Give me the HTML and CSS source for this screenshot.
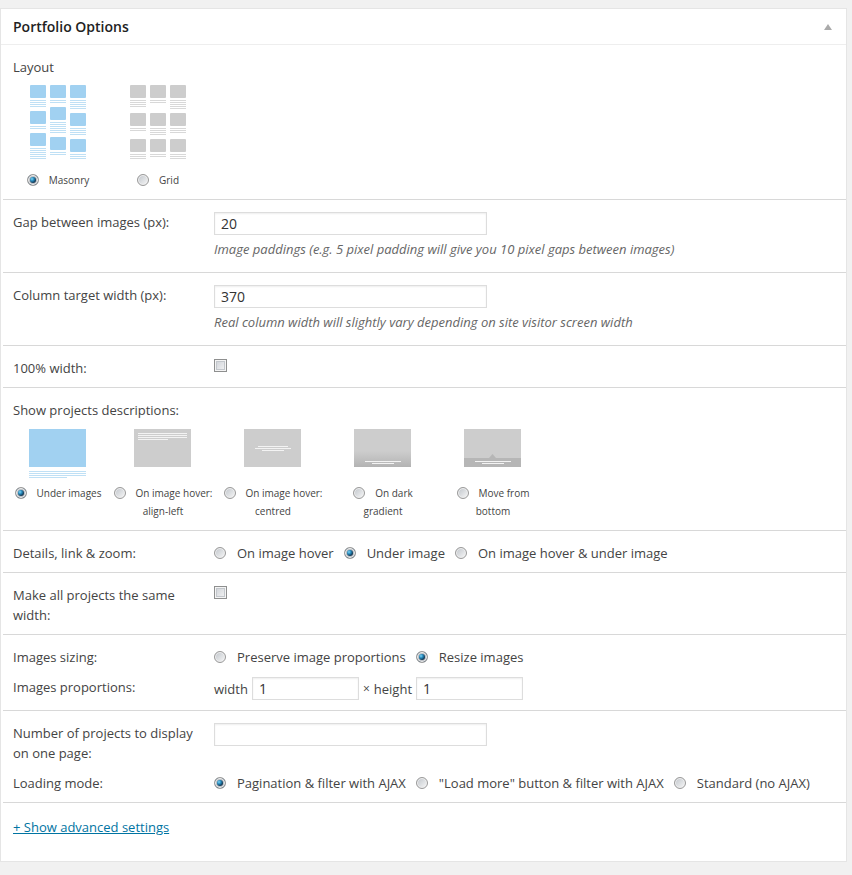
FILE: index.html
```html
<!DOCTYPE html>
<html lang="en">
<head>
  <meta charset="utf-8">
  <title>Portfolio Options</title>
  <link rel="stylesheet" href="styles.css">
</head>
<body>

  <form class="postbox">
    <div class="postbox-header">
      <h2>Portfolio Options</h2>
      <button type="button" class="toggle" aria-label="Toggle panel">
        <svg width="8" height="6" viewBox="0 0 8 6"><path d="M4 0L8 6H0z" fill="#aaa"/></svg>
      </button>
    </div>

    <div class="inside">

      <div class="section">
        <div class="label" id="layout-label">Layout</div>
        <div class="choices" role="radiogroup" aria-labelledby="layout-label">
          <label class="choice">
            <svg width="56" height="80" viewBox="0 0 56 80">
              <g fill="#a1d1f1">
                <rect x="0" y="0" width="16" height="13" rx="1"/>
                <rect x="0" y="26" width="16" height="13" rx="1"/>
                <rect x="0" y="48" width="16" height="13" rx="1"/>
                <rect x="20" y="0" width="16" height="13" rx="1"/>
                <rect x="20" y="22" width="16" height="13" rx="1"/>
                <rect x="20" y="52" width="16" height="13" rx="1"/>
                <rect x="40" y="0" width="16" height="13" rx="1"/>
                <rect x="40" y="28" width="16" height="13" rx="1"/>
                <rect x="40" y="54" width="16" height="13" rx="1"/>
              </g>
              <path fill="#bfe0f5" d="M0 15h16v1H0zM0 17h16v1H0zM0 19h16v1H0zM0 21h16v1H0zM0 41h16v1H0zM0 43h16v1H0zM0 63h16v1H0zM0 65h16v1H0zM0 67h16v1H0zM0 69h16v1H0zM0 71h16v1H0zM0 73h16v1H0z"/>
              <path fill="#bfe0f5" d="M20 15h16v1H20zM20 17h16v1H20zM20 37h16v1H20zM20 39h16v1H20zM20 41h16v1H20zM20 43h16v1H20zM20 45h16v1H20zM20 47h16v1H20zM20 67h16v1H20zM20 69h16v1H20z"/>
              <path fill="#bfe0f5" d="M40 15h16v1H40zM40 17h16v1H40zM40 19h16v1H40zM40 21h16v1H40zM40 23h16v1H40zM40 43h16v1H40zM40 45h16v1H40zM40 47h16v1H40zM40 49h16v1H40zM40 69h16v1H40zM40 71h16v1H40zM40 73h16v1H40z"/>
            </svg>
            <span><input type="radio" name="layout" checked>Masonry</span>
          </label>
          <label class="choice">
            <svg width="56" height="80" viewBox="0 0 56 80">
              <g fill="#cdcdcd">
                <rect x="0" y="0" width="16" height="13" rx="1"/>
                <rect x="0" y="28" width="16" height="13" rx="1"/>
                <rect x="0" y="54" width="16" height="13" rx="1"/>
                <rect x="20" y="0" width="16" height="13" rx="1"/>
                <rect x="20" y="28" width="16" height="13" rx="1"/>
                <rect x="20" y="54" width="16" height="13" rx="1"/>
                <rect x="40" y="0" width="16" height="13" rx="1"/>
                <rect x="40" y="28" width="16" height="13" rx="1"/>
                <rect x="40" y="54" width="16" height="13" rx="1"/>
              </g>
              <path fill="#d8d8d8" d="M0 15h16v1H0zM0 17h16v1H0zM0 19h16v1H0zM0 21h16v1H0zM0 43h16v1H0zM0 45h16v1H0zM0 69h16v1H0zM0 71h16v1H0zM0 73h16v1H0z"/>
              <path fill="#d8d8d8" d="M20 15h16v1H20zM20 17h16v1H20zM20 43h16v1H20zM20 45h16v1H20zM20 47h16v1H20zM20 49h16v1H20zM20 69h16v1H20zM20 71h16v1H20z"/>
              <path fill="#d8d8d8" d="M40 15h16v1H40zM40 17h16v1H40zM40 19h16v1H40zM40 21h16v1H40zM40 23h16v1H40zM40 43h16v1H40zM40 45h16v1H40zM40 47h16v1H40zM40 69h16v1H40zM40 71h16v1H40zM40 73h16v1H40z"/>
            </svg>
            <span><input type="radio" name="layout">Grid</span>
          </label>
        </div>
      </div>

      <div class="section">
        <div class="row">
          <label class="label" for="gap">Gap between images (px):</label>
          <div>
            <input type="text" class="text" id="gap" value="20">
            <p class="description">Image paddings (e.g. 5 pixel padding will give you 10 pixel gaps between images)</p>
          </div>
        </div>
      </div>

      <div class="section">
        <div class="row">
          <label class="label" for="column-width">Column target width (px):</label>
          <div>
            <input type="text" class="text" id="column-width" value="370">
            <p class="description">Real column width will slightly vary depending on site visitor screen width</p>
          </div>
        </div>
      </div>

      <div class="section">
        <div class="row">
          <label class="label" for="full-width">100% width:</label>
          <div><input type="checkbox" id="full-width"></div>
        </div>
      </div>

      <div class="section">
        <div class="label" id="desc-label">Show projects descriptions:</div>
        <div class="choices" role="radiogroup" aria-labelledby="desc-label">
          <label class="choice">
            <svg width="58" height="50" viewBox="0 0 58 50">
              <path fill="#a1d1f1" d="M0 1h57v38H0z"/>
              <path fill="#bfe0f5" d="M0 43h57v1H0zM0 45h57v1H0zM0 47h57v1H0zM0 49h38v1H0z"/>
            </svg>
            <span><input type="radio" name="descriptions" checked>Under images</span>
          </label>
          <label class="choice wide">
            <svg width="58" height="50" viewBox="0 0 58 50">
              <path fill="#cdcdcd" d="M0 1h57v38H0z"/>
              <path fill="#f3f3f3" d="M4 5h49v1H4zM4 7h49v1H4zM4 9h49v1H4zM4 11h30v1H4z"/>
            </svg>
            <span><input type="radio" name="descriptions">On image hover:<br>align-left</span>
          </label>
          <label class="choice wide">
            <svg width="58" height="50" viewBox="0 0 58 50">
              <path fill="#cdcdcd" d="M0 1h57v38H0z"/>
              <path fill="#f3f3f3" d="M14 18h30v1H14zM11 20h36v1H11zM18 22h22v1H18z"/>
            </svg>
            <span><input type="radio" name="descriptions">On image hover:<br>centred</span>
          </label>
          <label class="choice wide">
            <svg width="58" height="50" viewBox="0 0 58 50">
              <defs>
                <linearGradient id="dark" x1="0" y1="0" x2="0" y2="1">
                  <stop offset="0" stop-color="#cdcdcd"/>
                  <stop offset="1" stop-color="#b3b3b3"/>
                </linearGradient>
              </defs>
              <path fill="#cdcdcd" d="M0 1h57v38H0z"/>
              <path fill="url(#dark)" d="M0 23h57v16H0z"/>
              <path fill="#f3f3f3" d="M11 33h36v1H11zM18 35h22v1H18z"/>
            </svg>
            <span><input type="radio" name="descriptions">On dark<br>gradient</span>
          </label>
          <label class="choice wide">
            <svg width="58" height="50" viewBox="0 0 58 50">
              <path fill="#cdcdcd" d="M0 1h57v38H0z"/>
              <path fill="#b6b6b6" d="M0 30h25l3.500-4 3.500 4h25v9H0z"/>
              <path fill="#f3f3f3" d="M11 33h36v1H11zM18 35h22v1H18z"/>
            </svg>
            <span><input type="radio" name="descriptions">Move from<br>bottom</span>
          </label>
        </div>
      </div>

      <div class="section">
        <div class="row">
          <div class="label" id="details-label">Details, link &amp; zoom:</div>
          <div class="radios" role="radiogroup" aria-labelledby="details-label">
            <label><input type="radio" name="details">On image hover</label>
            <label><input type="radio" name="details" checked>Under image</label>
            <label><input type="radio" name="details">On image hover &amp; under image</label>
          </div>
        </div>
      </div>

      <div class="section">
        <div class="row">
          <label class="label" for="same-width">Make all projects the same width:</label>
          <div><input type="checkbox" id="same-width"></div>
        </div>
      </div>

      <div class="section">
        <div class="row">
          <div class="label" id="sizing-label">Images sizing:</div>
          <div class="radios" role="radiogroup" aria-labelledby="sizing-label">
            <label><input type="radio" name="sizing">Preserve image proportions</label>
            <label><input type="radio" name="sizing" checked>Resize images</label>
          </div>
        </div>
        <div class="row">
          <div class="label">Images proportions:</div>
          <div class="proportions">
            <label for="prop-width">width</label>
            <input type="text" class="text small" id="prop-width" value="1">
            <span class="times">×</span>
            <label for="prop-height">height</label>
            <input type="text" class="text small" id="prop-height" value="1">
          </div>
        </div>
      </div>

      <div class="section">
        <div class="row">
          <label class="label" for="per-page">Number of projects to display on one page:</label>
          <div><input type="text" class="text" id="per-page"></div>
        </div>
        <div class="row">
          <div class="label" id="loading-label">Loading mode:</div>
          <div class="radios" role="radiogroup" aria-labelledby="loading-label">
            <label><input type="radio" name="loading" checked>Pagination &amp; filter with AJAX</label>
            <label><input type="radio" name="loading">"Load more" button &amp; filter with AJAX</label>
            <label><input type="radio" name="loading">Standard (no AJAX)</label>
          </div>
        </div>
      </div>

      <div class="advanced">
        <a href="#advanced">+ Show advanced settings</a>
      </div>

    </div>
  </form>

</body>
</html>
```

FILE: styles.css
```css
* {
  box-sizing: border-box;
}

body {
  margin: 8px 5px 13px 0;
  background: #f1f1f1;
  color: #444;
  font-family: "Open Sans", sans-serif;
  font-size: 13px;
  line-height: 20px;
}

.postbox {
  background: #fff;
  border: 1px solid #e5e5e5;
  box-shadow: 0 1px 1px rgba(0, 0, 0, 0.04);
}

.postbox-header {
  display: flex;
  align-items: center;
  justify-content: space-between;
  height: 36px;
  padding: 0 14px 0 12px;
  border-bottom: 1px solid #eee;
}

.postbox-header h2 {
  margin: 0;
  color: #222;
  font-size: 14px;
  font-weight: 600;
}

.toggle {
  display: flex;
  padding: 0;
  border: 0;
  background: none;
}

.inside {
  padding-left: 2px;
}

.section {
  display: flex;
  flex-direction: column;
  gap: 10px;
  padding: 12px 0 9px 10px;
  border-bottom: 1px solid #d8d8d8;
}

.row {
  display: grid;
  grid-template-columns: 191px 1fr;
  column-gap: 10px;
}

/* image pickers */

.choices {
  display: flex;
  gap: 10px;
  margin: -2px 0 1px;
}

.choice {
  display: flex;
  flex-direction: column;
  align-items: center;
  gap: 6px;
  width: 90px;
  font-size: 10px;
  line-height: 18px;
  text-align: center;
  white-space: nowrap;
}

.choice.wide {
  width: 100px;
}

/* controls */

input {
  margin: 0;
  font-family: inherit;
  color: #333;
}

.text {
  display: block;
  width: 273px;
  height: 23px;
  padding: 0 6px;
  border: 1px solid #ddd;
  background: #fff;
  box-shadow: inset 0 1px 2px rgba(0, 0, 0, 0.07);
  font-size: 14px;
}

.text.small {
  width: 107px;
}

.description {
  margin: 4px 0;
  color: #666;
  font-style: italic;
}

input[type="radio"],
input[type="checkbox"] {
  appearance: none;
  width: 13px;
  height: 13px;
}

input[type="radio"] {
  width: 12px;
  height: 12px;
  margin-right: 11px;
  border: 1px solid #999;
  border-radius: 50%;
  background: linear-gradient(135deg, #bfc4ca, #f8f8f8);
  box-shadow: inset 0 0 0 1px #f0f0f0;
}

input[type="radio"]:checked {
  background: radial-gradient(circle at 4px 4px, #7fd6f7 0, #2486b8 2px, #12344f 4px);
  box-shadow: inset 0 0 0 1px #f0f0f0, inset 0 0 0 2px #b9bec4;
}

.choice input[type="radio"] {
  margin-right: 10px;
  vertical-align: -2px;
}

input[type="checkbox"] {
  display: block;
  margin-top: 1px;
  border: 1px solid #8e8f8f;
  background: linear-gradient(135deg, #cbcfd5, #f6f6f6);
  box-shadow: inset 0 0 0 1px #f4f4f4, inset 0 0 0 2px #c3c7cc;
}

.radios {
  display: flex;
  flex-wrap: wrap;
  column-gap: 10px;
}

.radios label {
  display: flex;
  align-items: center;
}

.proportions {
  display: flex;
  align-items: center;
  gap: 4px;
  margin-bottom: 1px;
}

.times {
  font-size: 12px;
}

.advanced {
  padding: 14px 10px 24px;
}

.advanced a {
  color: #0074a2;
}
```
